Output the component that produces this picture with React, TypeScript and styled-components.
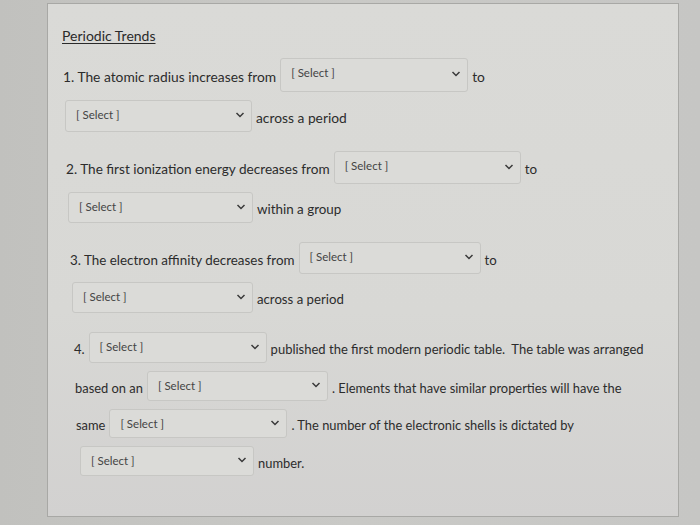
import React from 'react';
import styled, { createGlobalStyle } from 'styled-components';

const GlobalStyle = createGlobalStyle`
  html, body {
    margin: 0;
    padding: 0;
    background: #c4c4c1;
  }
  body {
    font-family: Lato, "Noto Sans", "Liberation Sans", sans-serif;
    color: #2e2e2e;
  }
`;

const Page = styled.div`
  width: 700px;
  height: 525px;
  box-sizing: border-box;
  padding: 3px 0 0 47px;
  background: linear-gradient(90deg, #c1c1be 0%, #c9c9c6 50%, #c6c6c4 100%);
  overflow: hidden;
`;

const Card = styled.div`
  width: 632px;
  height: 514px;
  box-sizing: border-box;
  padding: 23px 0 0 0;
  background: linear-gradient(180deg, #dadad7 0%, #d8d8d5 60%, #d2d1d0 100%);
  border: 1px solid #a8a8a5;
  display: flex;
  flex-direction: column;
`;

const Title = styled.h2`
  margin: 0 0 0 14px;
  font-size: 14px;
  line-height: 18px;
  font-weight: 400;
  color: #2a2a2a;
  text-decoration: underline;
  text-underline-offset: 2px;
`;

const Questions = styled.div`
  margin-top: 13px;
  display: flex;
  flex-direction: column;
  gap: 19px;
`;

const Question = styled.div`
  display: flex;
  flex-direction: column;
  gap: 8px;
`;

const Line = styled.div<{ $indent: number }>`
  display: flex;
  align-items: center;
  gap: 4px;
  padding-left: ${({ $indent }) => $indent}px;
`;

const Text = styled.span<{ $size?: number }>`
  font-size: ${({ $size }) => $size ?? 13.8}px;
  line-height: 18px;
  padding-top: 3px;
  white-space: nowrap;
  color: #2c2c2c;
`;

const SelectBox = styled.div<{ $w: number; $h: number }>`
  position: relative;
  width: ${({ $w }) => $w}px;
  height: ${({ $h }) => $h}px;
  box-sizing: border-box;
  padding: 7px 0 0 10px;
  background: #dbdbd8;
  border: 1px solid #c7c7c4;
  border-radius: 3px;
  font-size: 11.5px;
  line-height: 14px;
  color: #444;
  flex-shrink: 0;
`;

const Chevron = styled.svg`
  position: absolute;
  right: 6px;
  top: 50%;
  margin-top: -5px;
  width: 10px;
  height: 8px;
`;

function Dropdown({ w, h }: { w: number; h: number }) {
  return (
    <SelectBox $w={w} $h={h}>
      [ Select ]
      <Chevron viewBox="0 0 10 8">
        <path d="M1.5 2 L5 5.5 L8.5 2" fill="none" stroke="#3a3a3a" strokeWidth="1.5" />
      </Chevron>
    </SelectBox>
  );
}

export default function App() {
  return (
    <>
      <GlobalStyle />
      <Page>
        <Card>
          <Title>Periodic Trends</Title>
          <Questions>
            <Question>
              <Line $indent={15}>
                <Text>1. The atomic radius increases from</Text>
                <Dropdown w={188} h={34} />
                <Text>to</Text>
              </Line>
              <Line $indent={17}>
                <Dropdown w={187} h={32} />
                <Text>across a period</Text>
              </Line>
            </Question>
            <Question>
              <Line $indent={18}>
                <Text $size={13.6}>2. The first ionization energy decreases from</Text>
                <Dropdown w={187} h={33} />
                <Text $size={13.4}>to</Text>
              </Line>
              <Line $indent={20}>
                <Dropdown w={185} h={31} />
                <Text $size={13.4}>within a group</Text>
              </Line>
            </Question>
            <Question>
              <Line $indent={22}>
                <Text $size={13.4}>3. The electron affinity decreases from</Text>
                <Dropdown w={182} h={32} />
                <Text $size={13.2}>to</Text>
              </Line>
              <Line $indent={24}>
                <Dropdown w={181} h={31} />
                <Text $size={13.2}>across a period</Text>
              </Line>
            </Question>
            <Question>
              <Line $indent={26}>
                <Text $size={13}>4.</Text>
                <Dropdown w={178} h={31} />
                <Text $size={13}>published the first modern periodic table.&nbsp; The table was arranged</Text>
              </Line>
              <Line $indent={27}>
                <Text $size={12.9}>based on an</Text>
                <Dropdown w={181} h={30} />
                <Text $size={12.9}>. Elements that have similar properties will have the</Text>
              </Line>
              <Line $indent={28}>
                <Text $size={12.9}>same</Text>
                <Dropdown w={178} h={29} />
                <Text $size={12.9}>. The number of the electronic shells is dictated by</Text>
              </Line>
              <Line $indent={32}>
                <Dropdown w={174} h={30} />
                <Text $size={12.9}>number.</Text>
              </Line>
            </Question>
          </Questions>
        </Card>
      </Page>
    </>
  );
}
